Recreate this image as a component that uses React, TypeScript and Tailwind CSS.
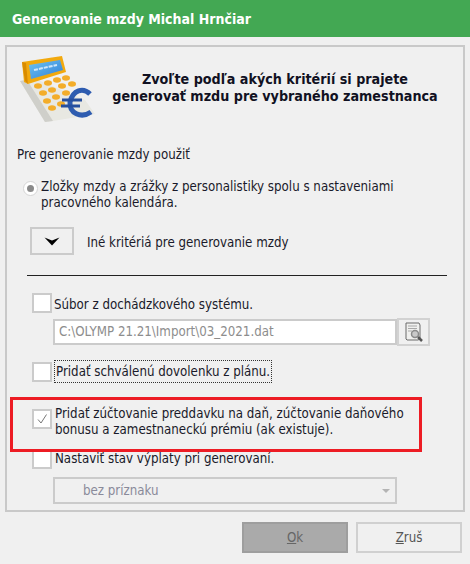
function Calculator() {
  return (
    <svg width="78" height="70" viewBox="0 0 78 70">
      <defs>
        <linearGradient id="scr" x1="0" y1="0" x2="1" y2="1">
          <stop offset="0" stopColor="#6fc4f2" />
          <stop offset="1" stopColor="#2f7fd8" />
        </linearGradient>
        <filter id="soft">
          <feGaussianBlur stdDeviation="0.7" />
        </filter>
      </defs>
      <g filter="url(#soft)">
        <path d="M1 25 L12 21 L66 44 L76 58 L34 65 L26 66 Z" fill="#e8e8e2" />
        <path d="M1 25 L26 66 L34 65 L8 24 Z" fill="#cfcfca" />
        <path d="M3 6 L43 0 L47 16 L9 28 L5 26 Z" fill="#f2a90f" />
        <path d="M3 6 L6 25 L9 28 L7 7 Z" fill="#d98c06" />
        <path d="M10 9 L41 4 L44 14 L12 23 Z" fill="url(#scr)" />
        <path d="M15 14 L38 9" stroke="#cfe6fa" strokeWidth="2" strokeDasharray="4 1" />
        <g fill="#f3ad2c">
          <ellipse cx="38" cy="24" rx="4" ry="2.8" />
          <ellipse cx="47" cy="22" rx="4" ry="2.8" />
          <ellipse cx="29" cy="27" rx="4" ry="2.8" />
          <ellipse cx="19" cy="30" rx="4" ry="2.8" />
          <ellipse cx="43" cy="30" rx="4" ry="2.8" />
          <ellipse cx="53" cy="28" rx="4" ry="2.8" />
          <ellipse cx="33" cy="34" rx="4" ry="2.8" />
          <ellipse cx="24" cy="37" rx="4" ry="2.8" />
          <ellipse cx="47" cy="37" rx="4" ry="2.8" />
          <ellipse cx="37" cy="41" rx="4" ry="2.8" />
          <ellipse cx="28" cy="45" rx="4" ry="2.8" />
          <ellipse cx="42" cy="48" rx="4" ry="2.8" />
          <ellipse cx="33" cy="52" rx="4" ry="2.8" />
        </g>
        <path
          d="M71 38 C64 31 54 34 51 46 C50 57 62 63 72 56"
          fill="none"
          stroke="#2f5cb0"
          strokeWidth="5"
        />
        <path d="M43 44 L63 44 M42 50 L61 50" stroke="#264f9e" strokeWidth="3" />
      </g>
    </svg>
  );
}

function FileSearchIcon() {
  return (
    <svg width="20" height="20" viewBox="0 0 20 20">
      <path d="M2 1 H15 L16 3 V17 L14 18 H3 L2 17 Z" fill="#f0f0ee" stroke="#6a6a6a" />
      <path d="M4 4 H13 M4 6.5 H13 M4 9 H8" stroke="#a8a8a8" />
      <circle cx="11" cy="12" r="3.5" fill="#c9c9c9" stroke="#8a8a8a" strokeWidth="1.5" />
      <path d="M14 15 L18 19" stroke="#555" strokeWidth="2.5" />
    </svg>
  );
}

function Box({ checked }: { checked?: boolean }) {
  return (
    <div className="w-5 h-5 shrink-0 border-2 border-[#cbcbcb] bg-white flex items-center justify-center">
      {checked && (
        <svg width="12" height="12" viewBox="0 0 12 12">
          <path d="M2 6.5 L5 10 L10.5 1.5" fill="none" stroke="#777" strokeWidth="1" />
        </svg>
      )}
    </div>
  );
}

export default function App() {
  return (
    <div className="w-[470px] h-[564px] overflow-hidden relative bg-[#f0f0f0] text-[#1a1a2a] text-[13.2px] leading-[16px] font-['DejaVu_Sans_Condensed','DejaVu_Sans',sans-serif] flex flex-col">
      {/* Title bar */}
      <div className="h-[37px] shrink-0 bg-[#43a853] text-white font-bold text-[14px] pl-3 flex items-center">
        Generovanie mzdy Michal Hrnčiar
      </div>

      {/* Main panel */}
      <div className="mt-2 mx-[5px] h-[467px] border-2 border-[#c9c9c9] flex flex-col">
        <div className="flex h-[83px] pl-3 pt-[9px]">
          <Calculator />
          <div className="flex-1 pt-[15px] pr-[12px] pl-[2px] text-center font-bold text-[14.2px] leading-[17px] text-[#111122]">
            Zvoľte podľa akých kritérií si prajete
            <br />
            generovať mzdu pre vybraného zamestnanca
          </div>
        </div>

        <div className="pl-[10px] mt-[17px]">Pre generovanie mzdy použiť</div>

        <div className="flex pl-4 mt-[16px]">
          <div className="w-[15px] h-[15px] mt-[2px] rounded-full border border-[#d4d4d4] bg-white flex items-center justify-center shrink-0">
            <div className="w-[7px] h-[7px] rounded-full bg-[#8a8a8a]" />
          </div>
          <div className="ml-[3px] w-[400px]">
            Zložky mzdy a zrážky z personalistiky spolu s nastaveniami
            <br />
            pracovného kalendára.
          </div>
        </div>

        <div className="flex items-center pl-[23px] mt-[16px]">
          <div className="w-[44px] h-[28px] border-2 border-[#cbcbcb] flex items-center justify-center">
            <svg width="16" height="9" viewBox="0 0 16 9">
              <path d="M0.5 0.5 L8 3.5 L15.5 0.5 L8 8.5 Z" fill="#000" />
            </svg>
          </div>
          <div className="ml-[13px] mt-[3px]">Iné kritériá pre generovanie mzdy</div>
        </div>

        <div className="h-px bg-[#222] ml-5 w-[420px] mt-[20px]" />

        <div className="flex items-center pl-[25px] mt-[17px]">
          <Box />
          <div className="ml-[2px] mt-[3px]">Súbor z dochádzkového systému.</div>
        </div>

        <div className="flex items-center pl-[46px] mt-[5px]">
          <div className="w-[344px] h-[26px] border-2 border-[#cbcbcb] bg-white text-[#8d8d8d] pl-[4px] flex items-center">
            C:\OLYMP 21.21\Import\03_2021.dat
          </div>
          <div className="w-[33px] h-[28px] border-2 border-[#d2d2d2] flex items-center justify-center">
            <FileSearchIcon />
          </div>
        </div>

        <div className="flex items-center pl-[25px] mt-[14px]">
          <Box />
          <div className="ml-[2px] h-[23px] px-[1px] flex items-center border border-dotted border-[#333]">
            Pridať schválenú dovolenku z plánu.
          </div>
        </div>

        <div className="flex pl-[25px] mt-[25px]">
          <div className="mt-[1px]">
            <Box checked />
          </div>
          <div className="ml-[3px] -mt-[2px]">
            Pridať zúčtovanie preddavku na daň, zúčtovanie daňového
            <br />
            bonusu a zamestnaneckú prémiu (ak existuje).
          </div>
        </div>

        <div className="flex items-center pl-[25px] mt-[11px]">
          <Box />
          <div className="ml-[3px]">Nastaviť stav výplaty pri generovaní.</div>
        </div>

        <div className="ml-[46px] mt-[8px] w-[344px] h-[27px] border-2 border-[#cbcbcb] text-[#8a8a9a] pl-[28px] pr-[5px] flex items-center justify-between">
          <span>bez príznaku</span>
          <svg width="8" height="4" viewBox="0 0 8 4">
            <path d="M0 0 H8 L4 4 Z" fill="#b4b4b4" />
          </svg>
        </div>
      </div>

      {/* Footer buttons */}
      <div className="flex justify-end gap-2 pr-2 mt-[10px]">
        <div className="w-[106px] h-[31px] bg-[#aaaaaa] border-2 border-[#9e9e9e] text-[#666] flex items-center justify-center">
          <span>
            <span className="underline">O</span>k
          </span>
        </div>
        <div className="w-[106px] h-[31px] border-2 border-[#d0d0d0] text-[#555] flex items-center justify-center">
          <span>
            <span className="underline">Z</span>ruš
          </span>
        </div>
      </div>

      {/* Annotation over the dialog */}
      <div className="absolute left-[10px] top-[397px] w-[412px] h-[55px] border-[3px] border-[#ed1c24]" />
    </div>
  );
}
